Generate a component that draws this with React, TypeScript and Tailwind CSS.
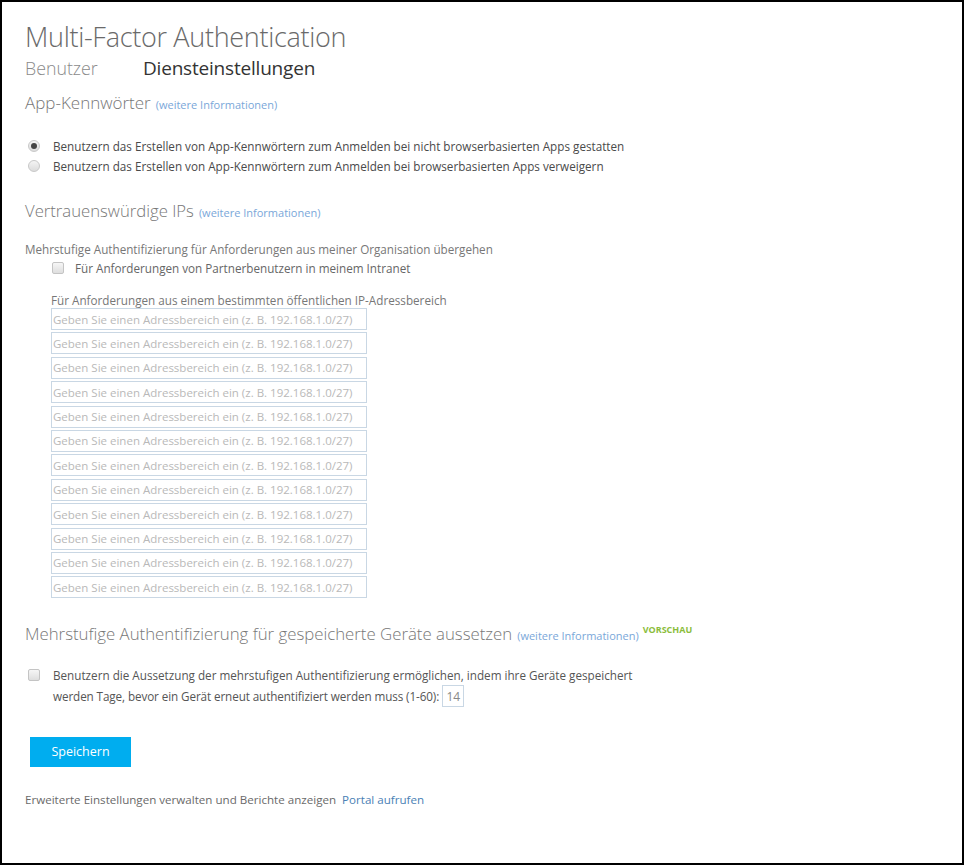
import React from 'react';

const font = { fontFamily: '"Open Sans", "Liberation Sans", sans-serif' };

function InfoLink() {
  return <a className="ml-[5px] text-[11px] text-[#7aa7d9] font-normal">(weitere Informationen)</a>;
}

function Radio({ checked }: { checked?: boolean }) {
  return (
    <span className="w-[12px] h-[12px] rounded-full border border-[#c8c8c8] bg-gradient-to-b from-[#f4f4f4] to-[#dcdcdc] flex items-center justify-center shrink-0">
      {checked && <span className="w-[6px] h-[6px] rounded-full bg-[#444]" />}
    </span>
  );
}

function Checkbox() {
  return (
    <span className="block w-[12px] h-[12px] rounded-[2px] border border-[#c4c4c4] bg-gradient-to-b from-[#f6f6f6] to-[#dedede] shrink-0" />
  );
}

export default function App() {
  const ranges = Array.from({ length: 12 });

  return (
    <div className="w-[964px] h-[865px] bg-white border-2 border-black overflow-hidden" style={font}>
      <div className="pl-[23px] pt-[18px]">
        <h1 className="text-[27px] font-light text-[#6a6a6a] leading-[34px] tracking-[-0.3px]">Multi-Factor Authentication</h1>

        {/* tabs */}
        <div className="flex items-baseline mt-[2px] leading-[24px]">
          <span className="text-[17.8px] font-light text-[#8a8a8a] w-[118px]">Benutzer</span>
          <span className="text-[19px] text-[#333] tracking-[-0.2px]">Diensteinstellungen</span>
        </div>

        {/* App-Kennwörter */}
        <div className="mt-[12px] flex items-baseline leading-[22px]">
          <h2 className="text-[17px] font-light text-[#777]">App-Kennwörter</h2>
          <InfoLink />
        </div>

        <div className="mt-[21px] flex flex-col gap-[2px] text-[11.7px] text-[#4a4a4a] leading-[18px]">
          <label className="flex items-center">
            <span className="ml-[3px] mr-[13px]"><Radio checked /></span>
            Benutzern das Erstellen von App-Kennwörtern zum Anmelden bei nicht browserbasierten Apps gestatten
          </label>
          <label className="flex items-center">
            <span className="ml-[3px] mr-[13px]"><Radio /></span>
            Benutzern das Erstellen von App-Kennwörtern zum Anmelden bei browserbasierten Apps verweigern
          </label>
        </div>

        {/* Vertrauenswürdige IPs */}
        <div className="mt-[25px] flex items-baseline leading-[22px]">
          <h2 className="text-[16.7px] font-light text-[#777]">Vertrauenswürdige IPs</h2>
          <InfoLink />
        </div>

        <p className="mt-[16px] text-[11.7px] text-[#777] leading-[18px]">
          Mehrstufige Authentifizierung für Anforderungen aus meiner Organisation übergehen
        </p>
        <label className="mt-[1px] ml-[27px] flex items-center text-[11.7px] text-[#666] leading-[18px]">
          <span className="mr-[11px]"><Checkbox /></span>
          Für Anforderungen von Partnerbenutzern in meinem Intranet
        </label>

        <p className="mt-[14px] ml-[26px] text-[11.7px] text-[#777] leading-[18px]">
          Für Anforderungen aus einem bestimmten öffentlichen IP-Adressbereich
        </p>
        <div className="ml-[26px] mt-[-1px] flex flex-col gap-[2.4px]">
          {ranges.map((_, i) => (
            <input
              key={i}
              className="w-[316px] h-[22px] border border-[#c9d7e4] px-[1px] text-[11.5px] placeholder:text-[#b9b9b9] outline-none"
              placeholder="Geben Sie einen Adressbereich ein (z. B. 192.168.1.0/27)"
            />
          ))}
        </div>

        {/* gespeicherte Geräte */}
        <div className="mt-[24px] flex items-baseline leading-[24px]">
          <h2 className="text-[16.8px] font-light text-[#777]">Mehrstufige Authentifizierung für gespeicherte Geräte aussetzen</h2>
          <InfoLink />
          <span className="ml-[4px] relative top-[-7px] text-[9px] font-bold text-[#8bbd3c]">VORSCHAU</span>
        </div>

        <div className="mt-[17px] flex text-[11.7px] text-[#555] leading-[19px]">
          <span className="ml-[3px] mr-[13px] mt-[3px]"><Checkbox /></span>
          <div>
            <div>Benutzern die Aussetzung der mehrstufigen Authentifizierung ermöglichen, indem ihre Geräte gespeichert</div>
            <div className="flex items-center tracking-[-0.1px]">
              werden Tage, bevor ein Gerät erneut authentifiziert werden muss (1-60):
              <span className="ml-[3px] w-[22px] h-[22px] border border-[#c9d7e4] text-[#888] text-[12px] flex items-center justify-center">14</span>
            </div>
          </div>
        </div>

        <button className="mt-[30px] ml-[5px] w-[101px] h-[30px] bg-[#00adef] text-white text-[12.5px]">
          Speichern
        </button>

        <p className="mt-[25px] text-[11.6px] text-[#6a6a6a] leading-[16px]">
          Erweiterte Einstellungen verwalten und Berichte anzeigen{' '}
          <a className="ml-[3px] text-[#4a7fb5]">Portal aufrufen</a>
        </p>
      </div>
    </div>
  );
}
